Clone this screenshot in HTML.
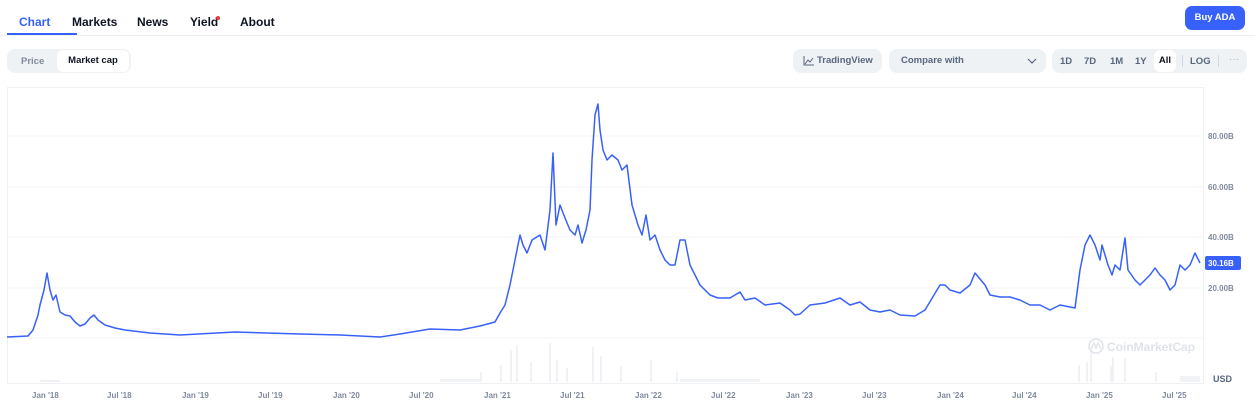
<!DOCTYPE html>
<html><head><meta charset="utf-8"><style>
body{margin:0;width:1255px;height:409px;background:#fff;font-family:"Liberation Sans",sans-serif;position:relative;overflow:hidden}
.tab{position:absolute;top:15px;font-size:12px;font-weight:bold;color:#0d1421}
.btn{position:absolute;background:#eff2f5;border-radius:8px;font-size:9.5px;font-weight:bold;color:#58667e}
.t{position:absolute;top:56px;font-size:9.5px;font-weight:bold;color:#58667e}
</style></head><body>
<div class="tab" style="left:19px;color:#3861fb">Chart</div>
<div style="position:absolute;left:7px;top:33px;width:70px;height:3px;background:#3861fb"></div>
<div class="tab" style="left:72px">Markets</div>
<div class="tab" style="left:137px">News</div>
<div class="tab" style="left:190px">Yield</div>
<div style="position:absolute;left:216px;top:16px;width:4px;height:4px;border-radius:2px;background:#ea3943"></div>
<div class="tab" style="left:240px">About</div>
<div style="position:absolute;left:0;top:35px;width:1255px;height:1px;background:#eff2f5"></div>
<div style="position:absolute;left:1185px;top:6px;width:60px;height:24px;background:#3861fb;border-radius:7px;color:#fff;font-size:9.5px;font-weight:bold;text-align:center;line-height:24px">Buy ADA</div>

<div class="btn" style="left:7px;top:49px;width:124px;height:24px"></div>
<div style="position:absolute;left:21px;top:56px;font-size:9.5px;font-weight:bold;color:#808a9d">Price</div>
<div style="position:absolute;left:57px;top:50px;width:72px;height:22px;background:#fff;border-radius:6px;font-size:9.5px;font-weight:bold;color:#0d1421;text-align:center;line-height:22px">Market cap</div>

<div class="btn" style="left:793px;top:49px;width:89px;height:24px;line-height:24px">
<svg style="position:absolute;left:10px;top:7px" width="11" height="10"><path d="M1 0V9H11M2 8L5 4L7 6L10 2" fill="none" stroke="#58667e" stroke-width="1"/></svg>
<span style="margin-left:24px">TradingView</span></div>
<div class="btn" style="left:889px;top:49px;width:157px;height:24px;line-height:24px"><span style="margin-left:12px">Compare with</span>
<svg style="position:absolute;right:9px;top:9px" width="10" height="6"><path d="M1 1L5 5L9 1" fill="none" stroke="#58667e" stroke-width="1.2"/></svg></div>
<div class="btn" style="left:1052px;top:49px;width:195px;height:24px"></div>
<div class="t" style="left:1060px">1D</div>
<div class="t" style="left:1084px">7D</div>
<div class="t" style="left:1110px">1M</div>
<div class="t" style="left:1135px">1Y</div>
<div style="position:absolute;left:1154px;top:50px;width:22px;height:22px;background:#fff;border-radius:6px;font-size:9.5px;font-weight:bold;color:#0d1421;text-align:center;line-height:22px">All</div>
<div style="position:absolute;left:1182px;top:55px;width:1px;height:12px;background:#cfd6e4"></div>
<div class="t" style="left:1190px">LOG</div>
<div style="position:absolute;left:1218px;top:55px;width:1px;height:12px;background:#cfd6e4"></div>
<div style="position:absolute;top:54px;font-size:10px;color:#a6b0c3;left:1229px">···</div>

<svg style="position:absolute;left:0;top:0" width="1255" height="409">
<rect x="7.5" y="87.5" width="1196" height="296" fill="none" stroke="#eff2f5"/>
<g stroke="#f4f5f8"><line x1="8" y1="136" x2="1203" y2="136"/><line x1="8" y1="187" x2="1203" y2="187"/><line x1="8" y1="237" x2="1203" y2="237"/><line x1="8" y1="288" x2="1203" y2="288"/><line x1="8" y1="338" x2="1203" y2="338"/></g>
<g fill="#f0f2f5">
<rect x="480" y="372" width="2" height="10"/><rect x="500" y="365" width="2" height="17"/><rect x="510" y="350" width="2" height="32"/><rect x="516" y="345" width="2" height="37"/><rect x="530" y="362" width="2" height="20"/><rect x="549" y="343" width="2" height="39"/><rect x="556" y="360" width="2" height="22"/><rect x="566" y="368" width="2" height="14"/><rect x="592" y="347" width="2" height="35"/><rect x="600" y="356" width="2" height="26"/><rect x="620" y="366" width="2" height="16"/><rect x="650" y="360" width="2" height="22"/><rect x="676" y="372" width="2" height="10"/>
<rect x="1078" y="365" width="2" height="17"/><rect x="1086" y="362" width="2" height="20"/><rect x="1090" y="347" width="2" height="35"/><rect x="1110" y="366" width="2" height="16"/><rect x="1112" y="357" width="2" height="25"/><rect x="1124" y="358" width="2" height="24"/><rect x="1155" y="372" width="2" height="10"/><rect x="1180" y="376" width="20" height="6"/>
<rect x="440" y="379" width="40" height="3"/><rect x="680" y="379" width="80" height="3"/><rect x="40" y="380" width="20" height="2"/>
</g>
<circle cx="1096" cy="346" r="7" fill="none" stroke="#dfe3ea" stroke-width="1.5"/>
<path d="M1091 349L1094 343L1096 348L1098 343L1101 349" fill="none" stroke="#dfe3ea" stroke-width="1.3"/>
<text x="1107" y="351" font-size="12" fill="#dfe3ea" font-weight="bold" font-family="Liberation Sans">CoinMarketCap</text>
<polyline fill="none" stroke="#3861fb" stroke-width="1.5" stroke-linejoin="round" points="7,337 28,336 33,330 38,315 40,305 44,290 47,273 50,290 53,300 56,295 60,312 65,315 70,316 75,322 80,326 85,324 90,318 94,315 98,320 105,325 115,328 125,330 150,333 180,335 235,332 300,334 340,335 380,337 400,334 430,329 460,330 480,326 495,322 500,313 505,305 510,285 515,260 520,235 523,245 527,253 532,240 540,235 545,250 550,210 553,153 556,225 560,205 565,218 570,230 575,235 578,225 582,243 586,230 590,210 592,160 595,115 598,104 600,130 603,150 607,160 612,155 618,160 622,170 627,165 632,205 638,225 642,235 646,215 650,240 655,235 660,250 665,260 670,265 675,265 680,240 685,240 690,265 695,275 700,285 705,290 710,295 718,298 730,298 740,292 745,300 755,298 765,305 780,303 790,310 795,315 800,314 810,305 825,303 840,298 850,305 860,302 870,310 880,312 890,310 900,315 915,316 925,310 940,285 945,285 950,290 960,293 970,285 975,273 985,285 990,295 1000,297 1010,297 1020,300 1030,305 1040,305 1050,310 1060,305 1070,307 1075,308 1080,270 1085,245 1090,235 1095,245 1100,260 1102,245 1108,265 1112,275 1115,265 1120,270 1125,238 1128,270 1135,280 1140,285 1145,280 1150,275 1155,268 1160,275 1165,280 1170,290 1175,285 1180,265 1185,270 1190,265 1195,253 1200,263"/>
<g font-size="8" fill="#808a9d" font-weight="bold" font-family="Liberation Sans">
<text x="1208" y="139">80.00B</text><text x="1208" y="190">60.00B</text><text x="1208" y="240">40.00B</text><text x="1208" y="291">20.00B</text>
<text x="32" y="398">Jan '18</text><text x="107" y="398">Jul '18</text><text x="182" y="398">Jan '19</text><text x="258" y="398">Jul '19</text><text x="333" y="398">Jan '20</text><text x="409" y="398">Jul '20</text><text x="484" y="398">Jan '21</text><text x="560" y="398">Jul '21</text><text x="635" y="398">Jan '22</text><text x="711" y="398">Jul '22</text><text x="786" y="398">Jan '23</text><text x="862" y="398">Jul '23</text><text x="937" y="398">Jan '24</text><text x="1012" y="398">Jul '24</text><text x="1086" y="398">Jan '25</text><text x="1162" y="398">Jul '25</text>
</g>
<text x="1213" y="382" font-size="9" fill="#58667e" font-weight="bold" font-family="Liberation Sans">USD</text>
<rect x="1205" y="256" width="36" height="14" rx="2" fill="#3861fb"/>
<text x="1208" y="266" font-size="8" fill="#fff" font-weight="bold" font-family="Liberation Sans">30.16B</text>
</svg>
</body></html>
